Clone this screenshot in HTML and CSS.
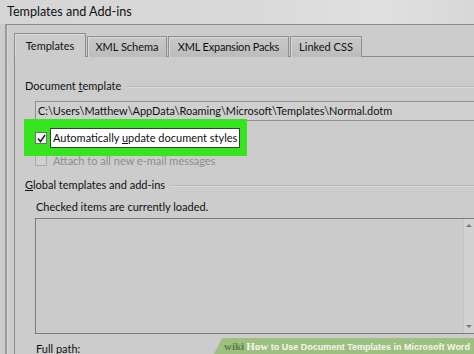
FILE: index.html
```html
<!DOCTYPE html>
<html lang="en">
<head>
    <meta charset="UTF-8">
    <title>Templates and Add-ins</title>
    <link rel="stylesheet" href="styles.css">
</head>
<body>
    <div class="window">
        <div class="titlebar">Templates and Add-ins</div>
        <div class="frame">
            <div class="tabs">
                <div class="tab tab-templates active">Templates</div>
                <div class="tab tab-schema">XML Schema</div>
                <div class="tab tab-packs">XML Expansion Packs</div>
                <div class="tab tab-css">Linked CSS</div>
            </div>
            <div class="panel">
                <div class="group-head"><span>Document <u>t</u>emplate</span></div>
                <div class="path-box">C:\Users\Matthew\AppData\Roaming\Microsoft\Templates\Normal.dotm</div>

                <div class="check-row highlight">
                    <span class="checkbox checked">
                        <svg width="9" height="9" viewBox="0 0 9 9"><path d="M1 4.5 L3.5 7.5 L8 1" fill="none" stroke="#1e1e1e" stroke-width="1.4"/></svg>
                    </span>
                    <span class="check-label focused">Automatically <u>u</u>pdate document styles</span>
                </div>
                <div class="check-row disabled">
                    <span class="checkbox"></span>
                    <span class="check-label">Attach to all new e-mail messages</span>
                </div>

                <div class="group-head"><span><u>G</u>lobal templates and add-ins</span></div>
                <div class="note">Checked items are currently loaded.</div>
                <div class="list-box">
                    <div class="scrollbar">
                        <span class="arrow up"></span>
                        <span class="arrow down"></span>
                    </div>
                </div>
                <div class="note">Full path:</div>
            </div>
        </div>
        <div class="wiki-banner"><span class="wiki">wiki</span><span class="how">How</span> to Use Document Templates in Microsoft Word</div>
    </div>
</body>
</html>
```

FILE: styles.css
```css
body {
    margin: 0;
    padding: 0;
    font-family: Lato, "Noto Sans", Arial, sans-serif;
    color: #111111;
    background: #cccccc;
}
.window {
    position: relative;
    width: 474px;
    height: 354px;
    overflow: hidden;
    background: #cccccc;
}
.titlebar {
    height: 24px;
    padding-left: 7px;
    font-size: 12.6px;
    line-height: 24px;
    background: linear-gradient(90deg, #d6d6d6 0%, #d9d9d9 50%, #e0e0e0 80%, #d8d8d8 100%);
    white-space: nowrap;
}
.frame {
    margin-left: 5px;
    border-top: 1px solid #8c8c8c;
    border-left: 2px solid #9b9b9b;
    padding: 8px 0 0 7px;
    box-shadow: inset 1px 0 0 #d8d8d8;
}
.tabs {
    display: flex;
    align-items: flex-end;
    gap: 1px;
    height: 24px;
    margin-bottom: -1px;
    position: relative;
    z-index: 1;
}
.tab {
    height: 21px;
    line-height: 20px;
    text-align: center;
    font-size: 11px;
    white-space: nowrap;
    box-sizing: border-box;
    border: 1px solid #8e8e8e;
    border-bottom: none;
    background: linear-gradient(180deg, #c9c9c9 0%, #bcbcbc 100%);
    box-shadow: inset 1px 1px 0 #d9d9d9;
}
.tab-templates { width: 72px; }
.tab-schema { width: 80px; }
.tab-packs { width: 121px; letter-spacing: -0.2px; }
.tab-css { width: 72px; }
.tab.active {
    height: 24px;
    line-height: 24px;
    background: #cccccc;
    box-shadow: inset 1px 1px 0 #dadada;
}
.panel {
    border-top: 1px solid #8a8a8a;
    border-left: 1px solid #8a8a8a;
    padding-left: 10px;
    height: 320px;
}
.group-head {
    display: flex;
    align-items: center;
    margin-top: 21px;
    font-size: 11px;
    line-height: 16px;
    white-space: nowrap;
}
.group-head::after {
    content: "";
    flex: 1;
    height: 1px;
    margin-left: 6px;
    background: #b9b9b9;
    box-shadow: 0 1px 0 #dadada;
}
.path-box {
    margin: 7px 0 0 10px;
    height: 18px;
    line-height: 18px;
    padding-left: 2px;
    font-size: 10.95px;
    white-space: nowrap;
    border: 1px solid #8f8f8f;
    border-right: none;
    background: #cfcfcf;
}
.check-row {
    display: flex;
    align-items: center;
    gap: 3px;
    margin-left: 10px;
    font-size: 11px;
    white-space: nowrap;
}
.checkbox {
    display: inline-flex;
    align-items: center;
    justify-content: center;
    width: 10px;
    height: 10px;
    border: 1px solid #8a8a8a;
    background: #d8d8d8;
    flex: none;
}
.checkbox.checked {
    background: #f4f4f4;
    border-color: #6f6f6f;
}
.check-row.highlight {
    position: relative;
    margin-top: 7px;
    height: 20px;
}
.check-row.highlight::before {
    content: "";
    position: absolute;
    left: -11px;
    top: -9px;
    width: 223px;
    height: 37px;
    background: #36e41f;
}
.check-row.highlight > * {
    position: relative;
    z-index: 1;
}
.check-label.focused {
    height: 18px;
    line-height: 18px;
    padding: 0 2px;
    background: #ffffff;
    border: 1px solid #3a3a3a;
}
.check-row.disabled {
    height: 18px;
    margin-top: 3px;
    color: #8c8c8c;
}
.check-row.disabled .checkbox {
    background: #cfcfcf;
    border-color: #a9a9a9;
}
.check-row.disabled .check-label {
    padding-left: 3px;
}
.note {
    margin: 6px 0 0 11px;
    font-size: 11px;
    line-height: 16px;
    white-space: nowrap;
}
.check-row.disabled + .group-head {
    margin-top: 8px;
}
.list-box {
    position: relative;
    margin: 3px 0 0 10px;
    height: 114px;
    border: 1px solid #7b7b7b;
    border-right: none;
    background: #cbcbcb;
    display: flex;
    justify-content: flex-end;
}
.scrollbar {
    width: 10px;
    display: flex;
    flex-direction: column;
    justify-content: space-between;
    align-items: center;
    padding: 5px 0;
    background: #d2d2d2;
    border-left: 1px solid #c4c4c4;
}
.arrow {
    width: 0;
    height: 0;
    border-left: 3px solid transparent;
    border-right: 3px solid transparent;
}
.arrow.up {
    border-bottom: 3px solid #777;
}
.arrow.down {
    border-top: 3px solid #777;
}
.list-box + .note {
    margin-top: 7px;
}
.wiki-banner {
    position: absolute;
    right: 0;
    bottom: 0;
    width: 250px;
    height: 16px;
    padding-left: 10px;
    line-height: 16px;
    font-family: "Liberation Sans", Arial, sans-serif;
    font-size: 9px;
    font-weight: bold;
    color: #f4f8ef;
    white-space: nowrap;
    background: #9dbf7f;
    clip-path: polygon(8px 0, 100% 0, 100% 100%, 0 100%);
}
.wiki-banner .wiki {
    font-family: "Liberation Serif", serif;
    font-size: 11px;
    color: #5f7d48;
}
.wiki-banner .how {
    font-family: "Liberation Serif", serif;
    font-size: 11px;
    margin-left: 2px;
}
```
